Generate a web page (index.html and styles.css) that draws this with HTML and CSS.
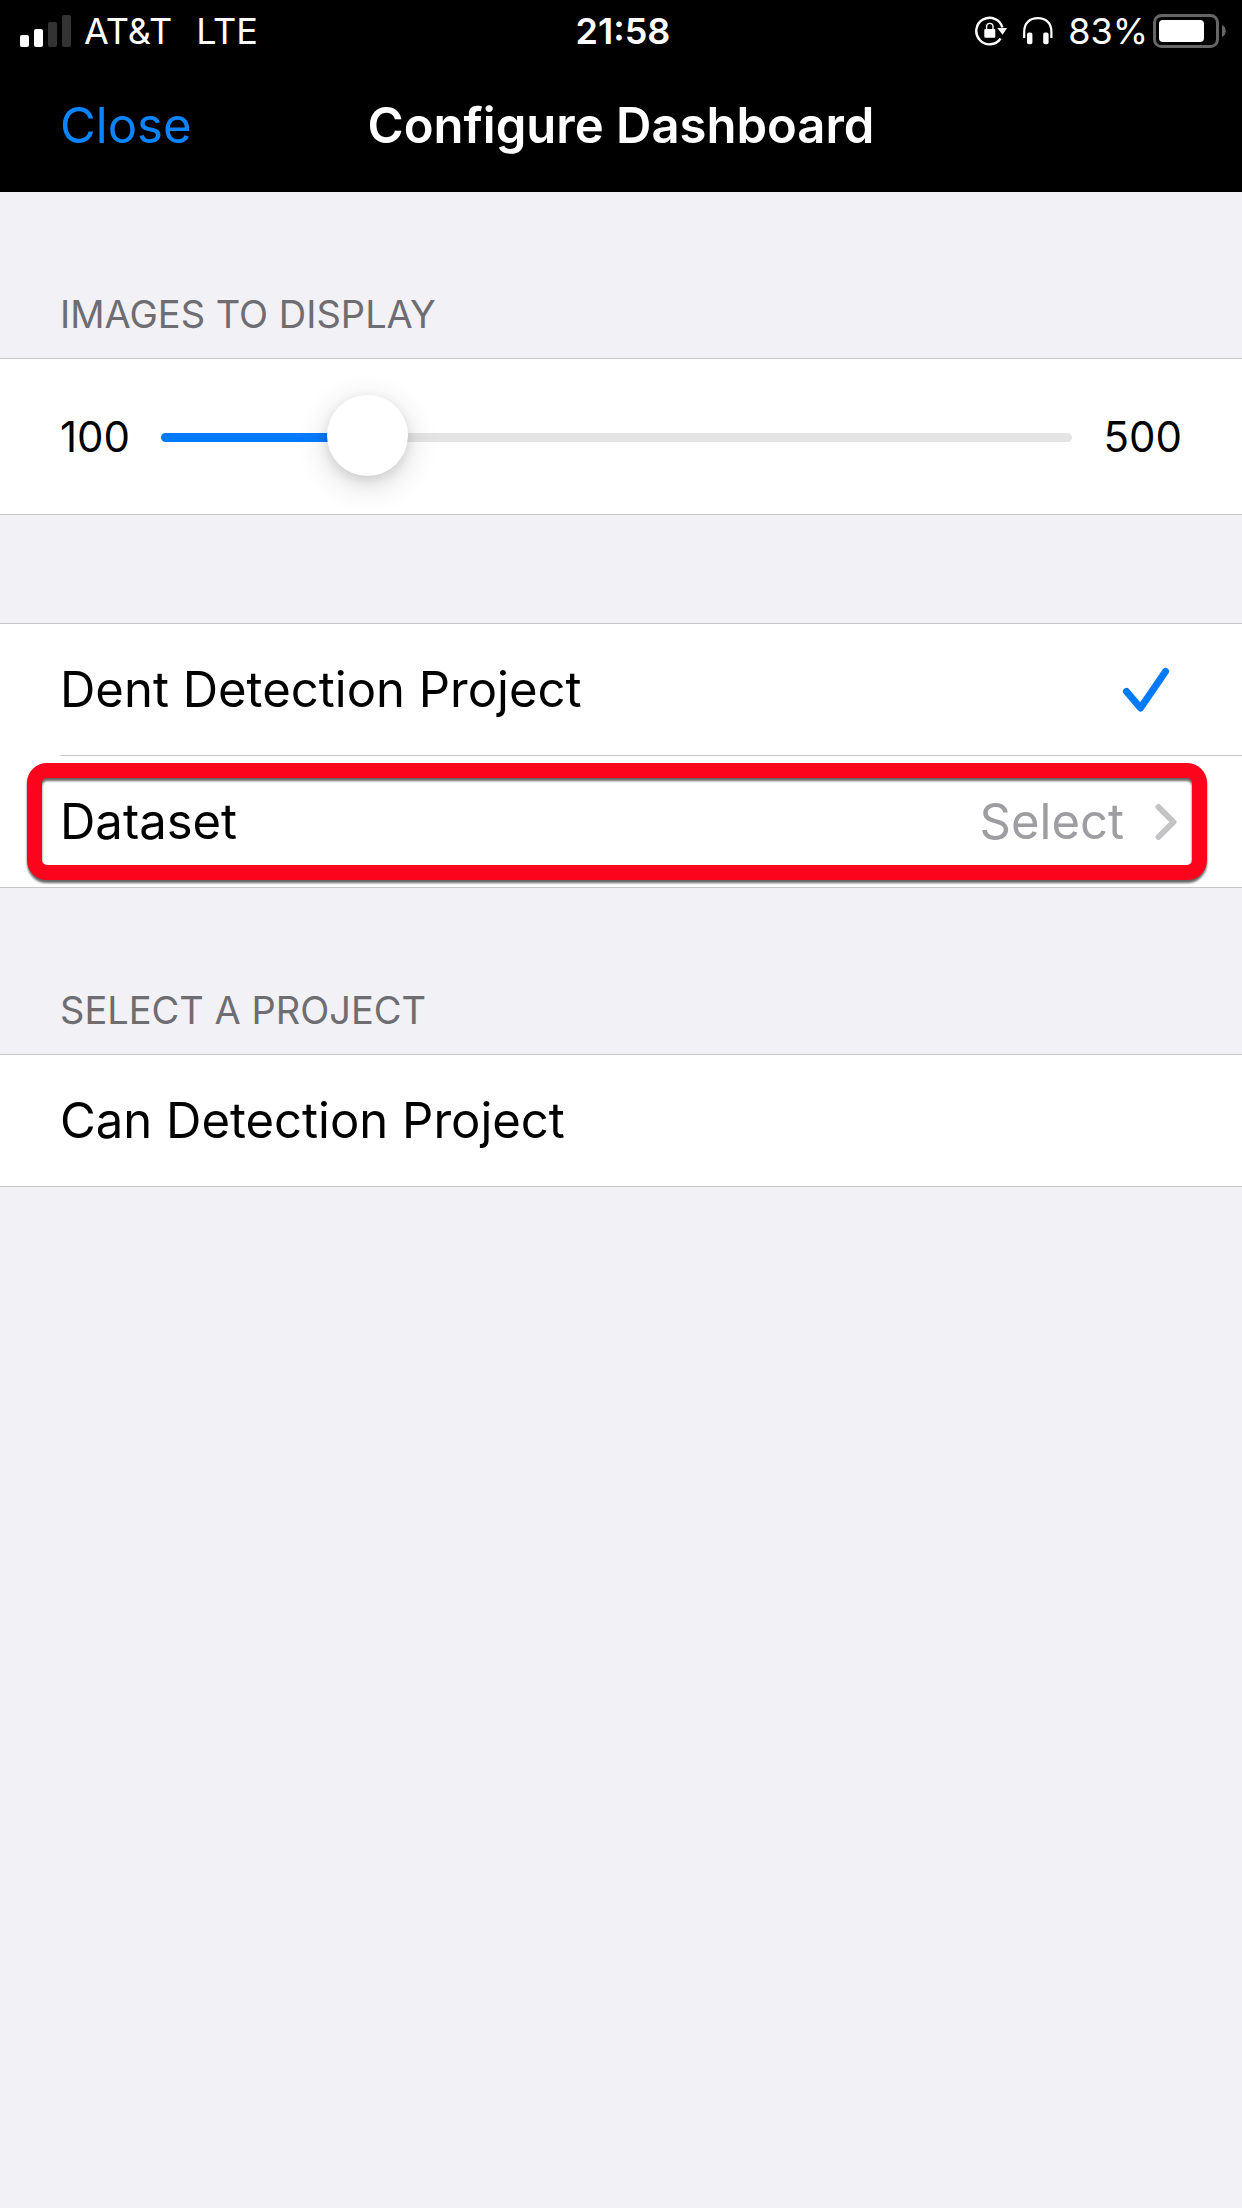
FILE: index.html
```html
<!DOCTYPE html>
<html lang="en">
<head>
  <meta charset="utf-8">
  <meta name="viewport" content="width=device-width, initial-scale=1">
  <title>Configure Dashboard</title>
  <link rel="stylesheet" href="styles.css">
</head>
<body>
  <header class="top">
    <div class="status">
      <div class="status-left">
        <svg class="signal" width="52" height="32" viewBox="0 0 52 32" aria-hidden="true">
          <rect x="0" y="20" width="9" height="12" rx="2" fill="#fff"/>
          <rect x="14" y="14" width="9" height="18" rx="2" fill="#fff"/>
          <rect x="28" y="7" width="9" height="25" rx="2" fill="#333"/>
          <rect x="42" y="0" width="9" height="32" rx="2" fill="#333"/>
        </svg>
        <span class="carrier">AT&amp;T</span>
        <span>LTE</span>
      </div>
      <time class="clock">21:58</time>
      <div class="status-right">
        <svg class="lock" width="33" height="30" viewBox="0 0 33 30" aria-hidden="true">
          <path d="M25.600 22.500A13.300 13.300 0 1 1 27.400 11.500" fill="none" stroke="#fff" stroke-width="2.400"/>
          <path d="M22.300 12H32L27.600 18.800Z" fill="#fff"/>
          <rect x="9.300" y="13" width="11" height="8.700" rx="1" fill="#fff"/>
          <path d="M11.600 13.500V10.600a3.200 3.200 0 0 1 6.400 0V13.500" fill="none" stroke="#fff" stroke-width="1.400"/>
        </svg>
        <svg class="phones" width="30" height="28" viewBox="0 0 30 28" aria-hidden="true">
          <path d="M1.200 21V14.500C1.200 6 7 1.200 14.800 1.200S28.400 6 28.400 14.500V21" fill="none" stroke="#fff" stroke-width="2.200"/>
          <rect x="4" y="15.600" width="5.400" height="11.600" rx="2" fill="#fff"/>
          <rect x="20.200" y="15.600" width="5.400" height="11.600" rx="2" fill="#fff"/>
        </svg>
        <span>83%</span>
        <svg class="battery" width="73" height="34" viewBox="0 0 73 34" aria-hidden="true">
          <rect x="1.500" y="1.500" width="63" height="31" rx="7" fill="none" stroke="#666" stroke-width="3"/>
          <rect x="6" y="6" width="45" height="22" rx="4" fill="#fff"/>
          <path d="M69 11C74 13 74 21 69 23Z" fill="#666"/>
        </svg>
      </div>
    </div>
    <nav class="nav">
      <button class="close" type="button">Close</button>
      <h1 class="title">Configure Dashboard</h1>
    </nav>
  </header>

  <main>
    <section class="group">
      <h2 class="heading"><label for="images">IMAGES TO DISPLAY</label></h2>
      <div class="list slider-row">
        <span>100</span>
        <input class="slider" id="images" type="range" min="100" max="500" value="180" style="--fill: 20%">
        <span>500</span>
      </div>
    </section>

    <section class="group group-plain">
      <ul class="list">
        <li>
          <button class="row" type="button" aria-pressed="true">
            <span>Dent Detection Project</span>
            <svg class="check" width="48" height="46" viewBox="0 0 48 46" aria-hidden="true">
              <path d="M4.500 24.500L18.500 41L43.500 4.500" fill="none" stroke="#007aff" stroke-width="7" stroke-linecap="round" stroke-linejoin="round"/>
            </svg>
          </button>
        </li>
        <li class="marked">
          <button class="row" type="button">
            <span>Dataset</span>
            <span class="value">Select
              <svg width="22" height="38" viewBox="0 0 22 38" aria-hidden="true">
                <path d="M3.500 4L18.500 19L3.500 34" fill="none" stroke="#c4c4c7" stroke-width="6" stroke-linecap="round" stroke-linejoin="round"/>
              </svg>
            </span>
          </button>
        </li>
      </ul>
    </section>

    <section class="group">
      <h2 class="heading">SELECT A PROJECT</h2>
      <ul class="list">
        <li><button class="row" type="button">Can Detection Project</button></li>
      </ul>
    </section>
  </main>
</body>
</html>
```
FILE: styles.css
```css
* {
  box-sizing: border-box;
}

body {
  margin: 0;
  min-height: 100vh;
  background: #f2f1f6;
  color: #000;
  font-family: Inter, "Liberation Sans", sans-serif;
  font-size: 49px;
  line-height: 64px;
}

button {
  padding: 0;
  border: 0;
  background: none;
  color: inherit;
  font: inherit;
  text-align: left;
}

h1,
h2,
ul {
  margin: 0;
  padding: 0;
  list-style: none;
}

svg {
  display: block;
  flex: none;
}

/* Header */

.top {
  background: #000;
  color: #fff;
}

.status {
  display: grid;
  grid-template-columns: 1fr auto 1fr;
  align-items: center;
  height: 62px;
  padding: 0 16px 0 20px;
  font-size: 36px;
  line-height: 44px;
}

.status-left,
.status-right {
  display: flex;
  align-items: center;
}

.status-right {
  justify-content: flex-end;
}

.carrier {
  margin: 0 24px 0 12px;
}

.clock {
  font-weight: 600;
}

.phones {
  margin: 0 15px;
}

.battery {
  margin-left: 5px;
}

.nav {
  display: grid;
  grid-template-columns: 1fr auto 1fr;
  padding: 32px 60px 34px;
}

.close {
  justify-self: start;
  color: #0a84ff;
}

.title {
  font-size: inherit;
  font-weight: 600;
}

/* Grouped lists */

.group {
  padding-top: 98px;
}

.group-plain {
  padding-top: 108px;
}

.heading {
  padding: 0 60px 20px;
  color: #6d6d72;
  font-size: 38px;
  font-weight: 400;
  line-height: 48px;
}

.list {
  border-top: 1px solid #c6c6c8;
  border-bottom: 1px solid #c6c6c8;
  background: #fff;
}

.row {
  display: flex;
  align-items: center;
  justify-content: space-between;
  width: 100%;
  min-height: 131px;
  padding: 0 60px;
}

.list li + li::before {
  content: "";
  display: block;
  margin-left: 60px;
  border-top: 1px solid #c6c6c8;
}

.check {
  margin-right: 12px;
}

.value {
  display: flex;
  align-items: center;
  gap: 31px;
  margin-right: 5px;
  color: #9d9da2;
}

/* Callout frame drawn over the Dataset row */

.marked {
  position: relative;
}

.marked::after {
  content: "";
  position: absolute;
  inset: 8px 35px 7px 27px;
  border: 15px solid #fb041c;
  border-radius: 20px;
  filter: drop-shadow(0 3px 1px rgba(0, 0, 0, 0.6));
  pointer-events: none;
}

/* Slider */

.slider-row {
  display: flex;
  align-items: center;
  gap: 31px;
  height: 157px;
  padding: 0 60px;
  font-size: 42px;
}

.slider {
  flex: 1;
  min-width: 0;
  height: 84px;
  margin: 0;
  appearance: none;
  background: none;
}

.slider::-webkit-slider-runnable-track {
  height: 9px;
  margin-top: 2px;
  border-radius: 5px;
  background: linear-gradient(to right, #007aff var(--fill), #e4e4e5 var(--fill));
}

.slider::-webkit-slider-thumb {
  width: 81px;
  height: 81px;
  margin-top: -38px;
  appearance: none;
  border-radius: 50%;
  background: #fff;
  box-shadow: 0 8px 32px rgba(0, 0, 0, 0.16), 0 4px 12px rgba(0, 0, 0, 0.1);
}

.slider::-moz-range-thumb {
  width: 81px;
  height: 81px;
  border: 0;
  border-radius: 50%;
  background: #fff;
}
```
